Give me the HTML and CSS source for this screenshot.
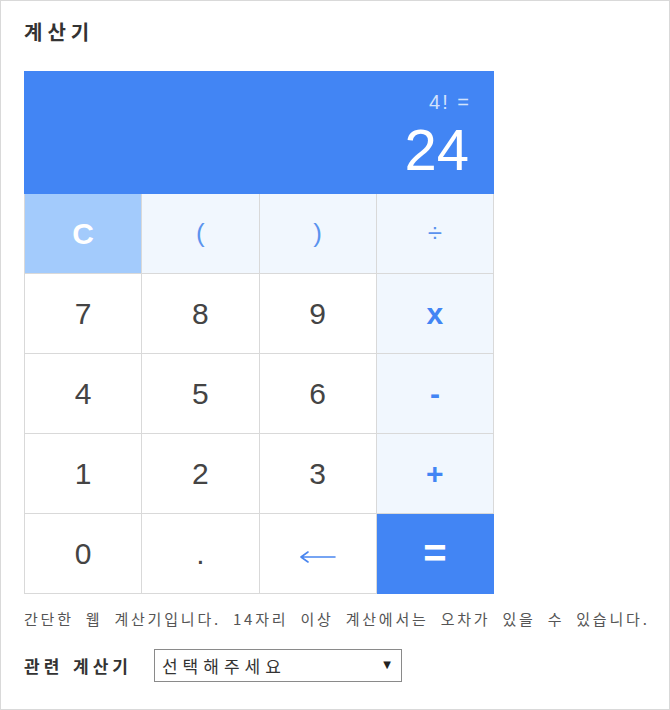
FILE: index.html
```html
<!DOCTYPE html>
<html lang="ko">
<head>
<meta charset="utf-8">
<title>계산기</title>
<link rel="stylesheet" href="styles.css">
</head>
<body>
<div class="frame">
  <h2 class="title">계산기</h2>
  <div class="calc">
    <div class="display">
      <div class="expr">4! =</div>
      <div class="result">24</div>
    </div>
    <div class="keys">
      <div class="key clear">C</div>
      <div class="key op thin">(</div>
      <div class="key op thin">)</div>
      <div class="key op thin">÷</div>
      <div class="key num">7</div>
      <div class="key num">8</div>
      <div class="key num">9</div>
      <div class="key op">x</div>
      <div class="key num">4</div>
      <div class="key num">5</div>
      <div class="key num">6</div>
      <div class="key op">-</div>
      <div class="key num">1</div>
      <div class="key num">2</div>
      <div class="key num">3</div>
      <div class="key op">+</div>
      <div class="key num">0</div>
      <div class="key num">.</div>
      <div class="key back" aria-label="←">
        <svg class="back-icon" width="36" height="14" viewBox="0 0 36 14">
          <path d="M1 7 H35 M1 7 L8 2 M1 7 L8 12" fill="none" stroke="#4a86ef" stroke-width="1.6" stroke-linecap="round"/>
        </svg>
      </div>
      <div class="key equal">=</div>
    </div>
  </div>
  <p class="note">간단한 웹 계산기입니다. 14자리 이상 계산에서는 오차가 있을 수 있습니다.</p>
  <div class="related">
    <span class="related-label">관련 계산기</span>
    <div class="select-wrap">
      <select class="select">
        <option>선택해주세요</option>
      </select>
      <span class="select-arrow">▼</span>
    </div>
  </div>
</div>
</body>
</html>
```

FILE: styles.css
```css
html, body {
  margin: 0;
  padding: 0;
  background: #ffffff;
}

.frame {
  box-sizing: border-box;
  width: 670px;
  height: 710px;
  border: 1px solid #d9d9d9;
  padding: 19px 23px 0 23px;
  font-family: "Liberation Sans", "Noto Sans CJK KR", sans-serif;
  color: #333;
}

.title {
  margin: 0 0 27px 0;
  font-family: "Noto Sans CJK KR", sans-serif;
  font-size: 20px;
  line-height: 24px;
  font-weight: 700;
  letter-spacing: 5px;
  color: #333;
}

.calc {
  width: 470px;
}

.display {
  box-sizing: border-box;
  height: 123px;
  background: #4285f4;
  padding: 20px 25px 0 0;
  text-align: right;
  font-family: "Liberation Sans", sans-serif;
}

.expr {
  font-size: 20px;
  line-height: 23px;
  color: #d3e2fc;
  letter-spacing: 2px;
  margin-right: -2px;
}

.result {
  margin-top: 6px;
  font-size: 58px;
  line-height: 60px;
  color: #ffffff;
}

.keys {
  display: grid;
  grid-template-columns: repeat(4, 1fr);
  grid-auto-rows: 80px;
  border-left: 1px solid #d9d9d9;
}

.key {
  box-sizing: border-box;
  display: flex;
  align-items: center;
  justify-content: center;
  border-right: 1px solid #d9d9d9;
  border-bottom: 1px solid #d9d9d9;
  font-family: "Liberation Sans", sans-serif;
  font-size: 30px;
  color: #444;
  background: #ffffff;
}

.clear {
  background: #a3cbfc;
  color: #ffffff;
  font-weight: 700;
}

.op {
  background: #f1f7fe;
  color: #4285f4;
  font-weight: 700;
}

.op.thin {
  font-weight: 400;
  font-size: 26px;
  color: #5b93ee;
}

.back-icon {
  display: block;
  margin-top: 6px;
}

.equal {
  background: #4285f4;
  color: #ffffff;
  font-weight: 700;
  font-size: 40px;
  border-color: #4285f4;
}

.note {
  margin: 15px 0 0 0;
  font-family: "Noto Sans CJK KR", sans-serif;
  font-size: 15px;
  line-height: 20px;
  letter-spacing: 2.8px;
  word-spacing: 5px;
  color: #555;
  white-space: nowrap;
}

.related {
  display: flex;
  align-items: center;
  margin-top: 20px;
}

.related-label {
  font-family: "Noto Sans CJK KR", sans-serif;
  font-size: 17px;
  font-weight: 700;
  letter-spacing: 4px;
  word-spacing: 1px;
  color: #333;
  margin-right: 22px;
}

.select-wrap {
  position: relative;
  width: 248px;
  height: 33px;
}

.select {
  box-sizing: border-box;
  width: 100%;
  height: 33px;
  -webkit-appearance: none;
  appearance: none;
  border: 1px solid #8a8a8a;
  border-radius: 0;
  background: #fff;
  padding: 0 0 0 7px;
  font-family: "Noto Sans CJK KR", sans-serif;
  font-size: 17px;
  letter-spacing: 5px;
  color: #333;
}

.select-arrow {
  position: absolute;
  right: 11px;
  top: 10px;
  font-family: "DejaVu Sans", sans-serif;
  font-size: 10px;
  color: #222;
  pointer-events: none;
}
```
